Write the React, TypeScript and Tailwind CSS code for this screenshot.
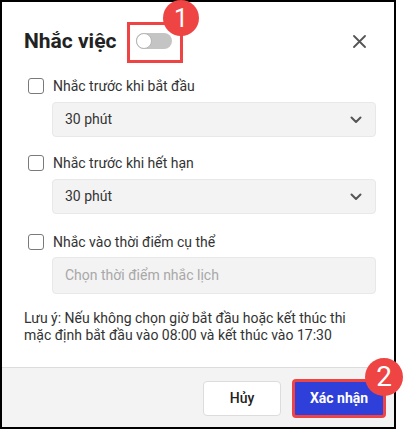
import React from "react";

function Checkbox() {
  return <span className="block w-[16px] h-[16px] rounded-[3px] border border-[#7a7a7a] bg-white shrink-0" />;
}

function Chevron() {
  return (
    <svg width="12" height="8" viewBox="0 0 12 8" className="shrink-0">
      <polyline points="1.5,1.5 6,6 10.5,1.5" fill="none" stroke="#555" strokeWidth="2" strokeLinecap="round" strokeLinejoin="round" />
    </svg>
  );
}

function Select({ value }: { value: string }) {
  return (
    <div className="ml-[50px] w-[324px] h-[35px] rounded-[4px] bg-[#f3f3f3] border border-[#e8e8e8] flex items-center justify-between pl-[12px] pr-[13px] text-[14px] text-[#333]">
      <span>{value}</span>
      <Chevron />
    </div>
  );
}

function Row({ label, className }: { label: string; className?: string }) {
  return (
    <div className={"flex items-center h-[20px] pl-[26px] gap-[9px] text-[14px] text-[#333] " + (className || "")}>
      <Checkbox />
      <span>{label}</span>
    </div>
  );
}

export default function App() {
  return (
    <div className="w-[406px] h-[429px] bg-white" style={{ fontFamily: "Roboto, 'Noto Sans', sans-serif" }}>
      <div className="relative w-[396px] h-[429px] border-2 border-black bg-white flex flex-col">
        <div className="flex items-center h-[26px] mt-[26px] pl-[22px] pr-[28px]">
          <span className="text-[21px] font-bold text-[#222] leading-[26px]">Nhắc việc</span>
          <div className="ml-[20px] relative w-[36px] h-[16px] rounded-full bg-[#c4c4c4]">
            <div className="absolute left-0 top-0 w-[16px] h-[16px] rounded-full bg-white border border-[#b5b5b5]" />
          </div>
          <div className="flex-1" />
          <svg width="13" height="13" viewBox="0 0 13 13">
            <path d="M1 1 L12 12 M12 1 L1 12" stroke="#555" strokeWidth="1.8" strokeLinecap="round" />
          </svg>
        </div>

        <div className="flex flex-col flex-1">
          <Row label="Nhắc trước khi bắt đầu" className="mt-[22px]" />
          <div className="mt-[6px]"><Select value="30 phút" /></div>
          <Row label="Nhắc trước khi hết hạn" className="mt-[16px]" />
          <div className="mt-[6px]"><Select value="30 phút" /></div>
          <Row label="Nhắc vào thời điểm cụ thể" className="mt-[18px]" />
          <div className="mt-[5px] ml-[50px] w-[324px] h-[37px] rounded-[4px] bg-[#f3f3f3] border border-[#e8e8e8] flex items-center pl-[12px] text-[14px] text-[#a8a8a8]">
            Chọn thời điểm nhắc lịch
          </div>
          <div className="mt-[16px] pl-[22px] pr-[10px] text-[14px] leading-[17px] text-[#333] whitespace-nowrap">
            Lưu ý: Nếu không chọn giờ bắt đầu hoặc kết thúc thi<br />mặc định bắt đầu vào 08:00 và kết thúc vào 17:30
          </div>
        </div>

        <div className="h-[60px] border-t border-[#dcdcdc] bg-[#f3f3f3] flex items-start justify-end pt-[13px] pr-[10px] gap-[13px]">
          <button className="w-[78px] h-[35px] rounded-[4px] bg-white border border-[#dcdcdc] text-[14px] text-[#222] font-medium">Hủy</button>
          <button className="w-[90px] h-[35px] rounded-[2px] bg-[#2f3fd9] text-white text-[14px] font-bold outline-[3px] outline-solid outline-[#ef4444] -outline-offset-1">Xác nhận</button>
        </div>

        <div className="absolute left-[125px] top-[20px] w-[56px] h-[41px] border-[3px] border-[#ef4444]" />
        <div className="absolute left-[161px] top-[-2px] w-[36px] h-[36px] rounded-full bg-[#ef4444] flex items-center justify-center text-white text-[25px] leading-none">1</div>
        <div className="absolute left-[363px] top-[356px] w-[38px] h-[38px] rounded-full bg-[#ef4444] flex items-center justify-center text-white text-[28px] leading-none">2</div>
      </div>
    </div>
  );
}
